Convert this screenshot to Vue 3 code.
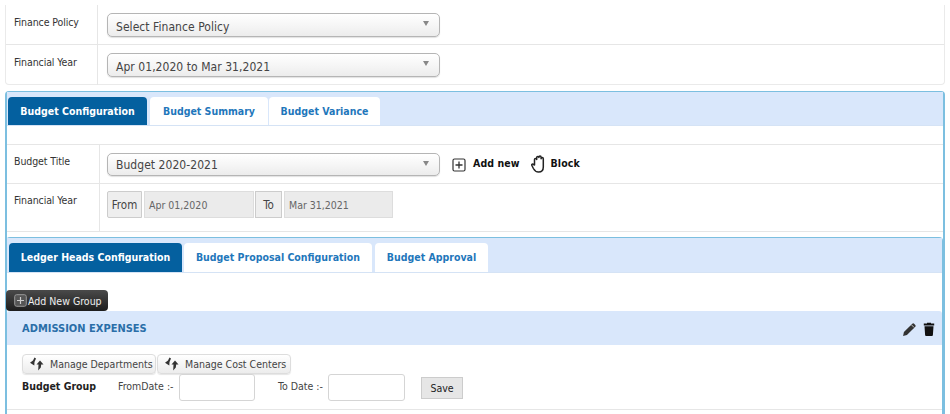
<template>
  <div class="page">
    <section class="form-card top-card">
      <div class="row r40">
        <div class="label">Finance Policy</div>
        <div class="value"><div class="select"><span>Select Finance Policy</span><i class="caret"></i></div></div>
      </div>
      <div class="row r40 last">
        <div class="label">Financial Year</div>
        <div class="value"><div class="select"><span>Apr 01,2020 to Mar 31,2021</span><i class="caret"></i></div></div>
      </div>
    </section>

    <section class="panel outer">
      <div class="tabs">
        <div v-for="(t, i) in outerTabs" :key="t" class="tab" :class="{ active: i === 0 }">{{ t }}</div>
      </div>
      <div class="outer-body">
        <div class="form-card inner-form">
          <div class="row r39">
            <div class="label l2">Budget Title</div>
            <div class="value v2">
              <div class="select"><span>Budget 2020-2021</span><i class="caret"></i></div>
              <svg class="ico-plus" viewBox="0 0 14 14" width="14" height="14"><rect x="1" y="1" width="12" height="12" rx="1.5" fill="none" stroke="#333" stroke-width="1.2"/><path d="M7 3.5v7M3.5 7h7" stroke="#333" stroke-width="1.3"/></svg>
              <b class="act add">Add new</b>
              <svg class="ico-hand" viewBox="0 0 15 18" width="15" height="18"><path d="M3.500 10V4.500a1.100 1.100 0 0 1 2.200 0V2.600a1.100 1.100 0 0 1 2.200 0v-.4a1.100 1.100 0 0 1 2.200 0v1.500a1.100 1.100 0 0 1 2.200 0V12c0 3-2 5-4.700 5S3.500 15.500 2.400 13.500L.9 10.500c-.6-1.100.9-2 1.600-1z" fill="#fff" stroke="#222" stroke-width="1.500" stroke-linejoin="round"/></svg>
              <b class="act">Block</b>
            </div>
          </div>
          <div class="row r47 last">
            <div class="label l2">Financial Year</div>
            <div class="value v3">
              <span class="addon from">From</span><span class="dis d1">Apr 01,2020</span>
              <span class="addon to">To</span><span class="dis d2">Mar 31,2021</span>
            </div>
          </div>
        </div>

        <section class="panel inner">
          <div class="tabs">
            <div v-for="(t, i) in innerTabs" :key="t" class="tab tab2" :class="{ active: i === 0 }">{{ t }}</div>
          </div>
          <div class="inner-body">
            <button class="dark-btn">
              <svg viewBox="0 0 13 13" width="13" height="13"><rect x=".7" y=".7" width="11.600" height="11.600" rx="2" fill="#555" stroke="#999"/><path d="M6.500 3v7M3 6.500h7" stroke="#ccc" stroke-width="1.200"/></svg>
              <span>Add New Group</span>
            </button>
            <div class="group-head">
              <span>ADMISSION EXPENSES</span>
              <span class="tools">
                <svg viewBox="0 0 14 14" width="15" height="15"><path d="M1 13l.8-3.600L9.600 1.600a1.200 1.200 0 0 1 1.700 0l1.100 1.100a1.200 1.200 0 0 1 0 1.700L4.600 12.200z" fill="#333"/><path d="M8.800 2.600l2.600 2.600" stroke="#ddd" stroke-width=".8"/></svg>
                <svg viewBox="0 0 12 14" width="12" height="14"><path d="M4 1.500V.8h4v.7h3.200v2H.8v-2zM1.500 4.300h9l-.6 8.700a1 1 0 0 1-1 1H3.100a1 1 0 0 1-1-1z" fill="#111"/></svg>
              </span>
            </div>
            <div class="group-body">
              <div class="manage">
                <button v-for="m in manage" :key="m" class="m-btn">
                  <svg viewBox="0 0 16 14" width="16" height="14"><path d="M6.500 .5L8 1.500 6.500 5 6.300 8.500 2 5.800 5 3.500zM12 3.500L15.500 7.500H13.200L12.800 10.500 10.200 13.500 10.500 7.500H8.500z" fill="#333"/></svg>
                  <span>{{ m }}</span>
                </button>
              </div>
              <div class="dates">
                <b class="bg">Budget Group</b>
                <span class="fd">FromDate :-</span><span class="inp"></span>
                <span class="td">To Date :-</span><span class="inp wide"></span>
                <button class="save">Save</button>
              </div>
            </div>
          </div>
        </section>
      </div>
    </section>
  </div>
</template>

<script setup>
const outerTabs = ['Budget Configuration', 'Budget Summary', 'Budget Variance']
const innerTabs = ['Ledger Heads Configuration', 'Budget Proposal Configuration', 'Budget Approval']
const manage = ['Manage Departments', 'Manage Cost Centers']
</script>

<style>
html, body { margin: 0; background: #fff; overflow: hidden; }
</style>

<style scoped>
.page {
  width: 950px; height: 414px; overflow: hidden; box-sizing: border-box;
  padding: 5px 5px 0;
  font-family: "DejaVu Sans Condensed", "DejaVu Sans", sans-serif;
  font-size: 10.500px; color: #333; background: #fff;
}
.form-card { background: #fff; }
.top-card { border: 1px solid #eaeaea; border-top: 0; border-radius: 0 0 4px 4px; height: 80px; box-sizing: border-box; }
.row { display: flex; border-bottom: 1px solid #e6e6e6; box-sizing: border-box; }
.row.last { border-bottom: 0; }
.r40 { height: 40px; }
.r39 { height: 39px; }
.r47 { height: 48px; }
.label { width: 92px; flex: none; border-right: 1px solid #e6e6e6; padding: 11px 0 0 8px; box-sizing: border-box; font-size: 10.500px; letter-spacing: -.1px; color: #333; }
.value { flex: 1; display: flex; align-items: flex-start; padding: 8px 0 0 9px; box-sizing: border-box; }
.select {
  width: 333px; height: 24px; box-sizing: border-box; border: 1px solid #b5b5b5; border-radius: 5px;
  background: linear-gradient(#fff, #f6f6f6 50%, #ececec);
  box-shadow: 0 1px 1px rgba(0,0,0,.12);
  display: flex; align-items: center; justify-content: space-between;
  padding: 3px 10px 0 8px; font-size: 12px; letter-spacing: .05px; color: #444;
}
.caret { width: 0; height: 0; border: 3.500px solid transparent; border-top: 5px solid #888; border-bottom: 0; margin-top: -6px; }

.panel { border: 1px solid #7cbfe0; border-radius: 4px 4px 0 0; box-sizing: border-box; }
.outer { margin-top: 6px; width: 940px; border-width: 1px 2px 0 2px; height: 330px; }
.tabs { background: #d9e7fb; display: flex; gap: 3px; padding: 5px 0 0 1px; height: 34px; box-sizing: border-box; border-bottom: 1px solid #d5e3f5; }
.tab {
  height: 28px; line-height: 28px; background: #fff; color: #1f77bb; font-weight: 700;
  font-size: 10.500px; border-radius: 4px 4px 0 0; box-sizing: border-box; text-align: center; padding: 0;
}
.tab.active { background: #04609f; color: #fff; }
.tabs > .tab:nth-child(1) { width: 139px; }
.tabs > .tab:nth-child(2) { width: 118px; }
.tabs > .tab:nth-child(3) { width: 111px; margin-left: -2px; }
.outer-body { padding-top: 18px; }
.inner-form { height: 88px; border-top: 1px solid #e6e6e6; border-bottom: 1px solid #e6e6e6; box-sizing: border-box; }
.l2 { width: 93px; padding-left: 7px; padding-top: 10px; }
.v2 { padding-left: 7px; }
.ico-plus { margin: 5px 0 0 12px; }
.act { color: #111; font-size: 10.500px; margin-top: 4px; letter-spacing: .08px; }
.add { margin-left: 7px; }
.ico-hand { margin: 2px 5px 0 11px; }
.v2 .select { height: 23px; padding-top: 1px; }
.v2 .caret { margin-top: -4px; }
.v3 { padding-left: 7px; padding-top: 7px; }
.addon, .dis { height: 27px; line-height: 26px; box-sizing: border-box; border: 1px solid #ddd; background: #eee; color: #444; display: inline-block; }
.addon { font-size: 11.500px; text-align: center; }
.from { width: 35px; border-color: #ccc; border-radius: 2px 0 0 2px; }
.d1 { width: 110px; margin: 0 1px 0 2px; padding-left: 4px; font-size: 10.500px; color: #666; background: #ebebeb; }
.to { width: 27px; border-color: #ccc; }
.d2 { width: 109px; margin-left: 2px; padding-left: 4px; font-size: 10.500px; color: #666; background: #ebebeb; }

.inner { margin: 5px 0 0 -1px; border-width: 1px 1px 0 1px; height: 180px; }
.inner .tabs { padding-left: 2px; height: 35px; gap: 2px; }
.inner .tabs > .tab:nth-child(1) { width: 173px; height: 29px; line-height: 29px; }
.inner .tabs > .tab:nth-child(2) { width: 188px; height: 29px; line-height: 29px; }
.inner .tabs > .tab:nth-child(3) { width: 113px; height: 29px; line-height: 29px; margin-left: 1px; }
.inner-body { padding-top: 17px; }
.dark-btn {
  display: flex; align-items: center; gap: 1px; height: 21px; width: 102px; margin: 0 0 0 -1px; padding: 0 0 0 8px; border: 0; border-radius: 4px;
  background: linear-gradient(#4a4a4a, #1d1d1d); color: #eee; font: 10.500px "DejaVu Sans Condensed", "DejaVu Sans", sans-serif; white-space: nowrap; box-sizing: border-box;
}
.group-head {
  height: 34px; background: #d9e7fb; border-radius: 3px 3px 0 0; display: flex; align-items: center; justify-content: space-between;
  padding: 0 7px 0 15px; font-weight: 700; font-size: 11px; color: #2a6ea8;
}
.tools { display: flex; gap: 6px; align-items: center; padding-top: 2px; }
.group-body { padding: 9px 0 0 15px; border-bottom: 1px solid #e6e6e6; height: 65px; box-sizing: border-box; }
.manage { display: flex; gap: 1px; }
.m-btn {
  height: 20px; width: 134px; border: 1px solid #ddd; border-radius: 4px; background: linear-gradient(#fff, #ececec); margin: 0; padding: 0 0 0 5px;
  display: flex; align-items: center; gap: 6px; font: 10.500px "DejaVu Sans Condensed", "DejaVu Sans", sans-serif; color: #444; white-space: nowrap; box-sizing: border-box; box-shadow: 0 1px 1px rgba(0,0,0,.1);
}
.dates { display: flex; align-items: flex-start; margin-top: 0; height: 27px; }
.bg { width: 96px; color: #222; font-size: 10.500px; margin-top: 6px; }
.fd { width: 61px; font-size: 10.500px; color: #444; margin-top: 6px; }
.td { width: 50px; margin-left: 23px; font-size: 10.500px; color: #444; margin-top: 6px; }
.inp { width: 76px; height: 27px; border: 1px solid #d5d5d5; border-radius: 3px; box-sizing: border-box; background: #fff; }
.inp.wide { width: 77px; }
.save { margin: 3px 0 0 16px; width: 42px; height: 22px; border: 1px solid #ccc; background: #e6e6e6; font: 10.500px "DejaVu Sans Condensed", "DejaVu Sans", sans-serif; color: #222; padding: 0; }
</style>
